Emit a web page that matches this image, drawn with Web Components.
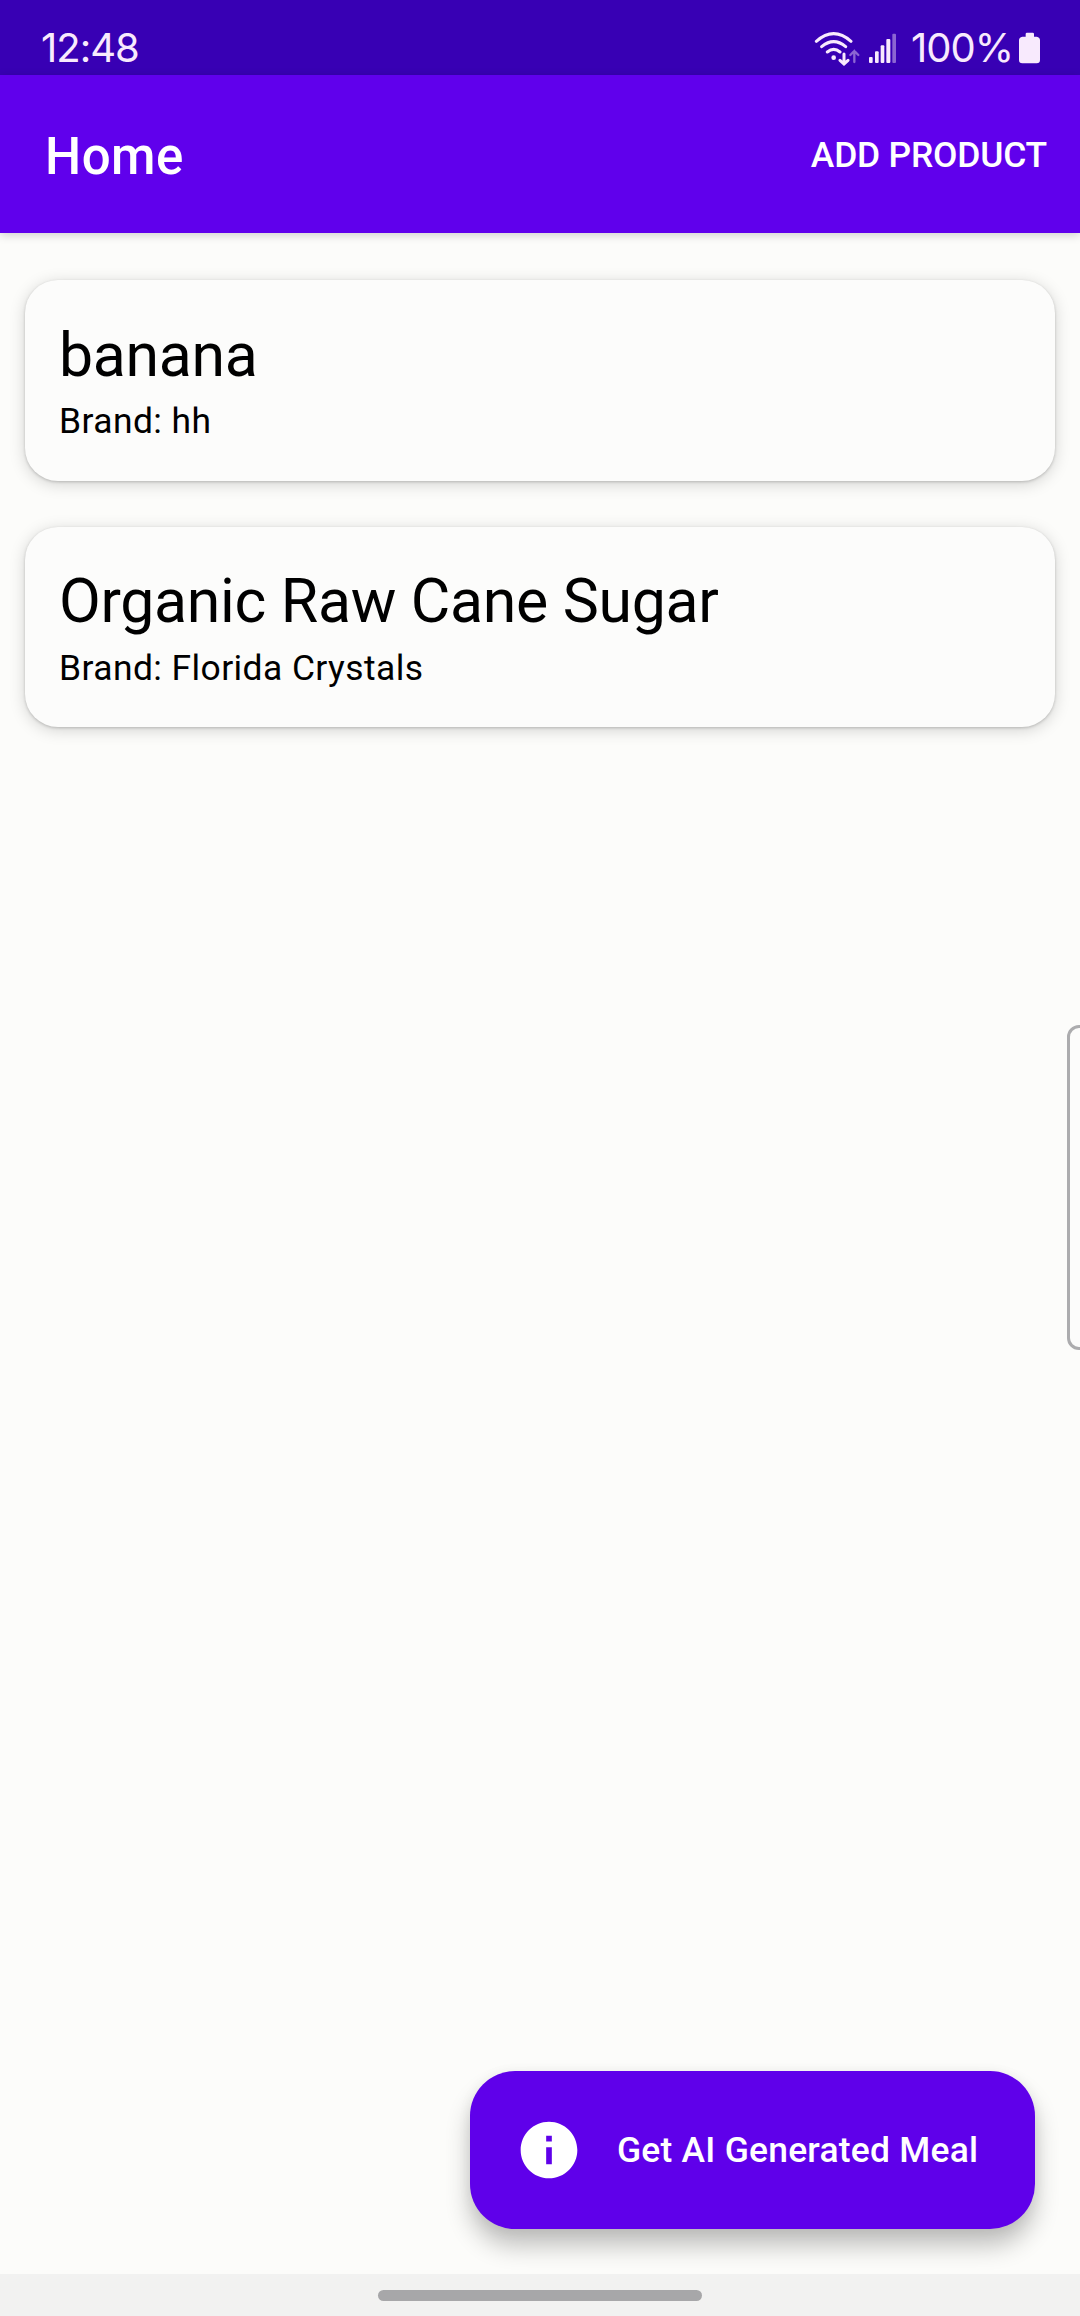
<!DOCTYPE html>
<html lang="en">
<head>
<meta charset="utf-8">
<title>Home</title>
<style>
html,body{margin:0;padding:0}
body{width:1080px;height:2316px;overflow:hidden;background:#fcfcfa;font-family:Roboto,sans-serif}
</style>
</head>
<body>
<meal-app></meal-app>
<script>
const define = (name, html) => customElements.define(name, class extends HTMLElement {
  constructor() {
    super();
    const t = document.createElement('template');
    t.innerHTML = html;
    this.attachShadow({ mode: 'open' }).append(t.content.cloneNode(true));
  }
});

define('status-bar', `
<style>
:host{display:flex;justify-content:space-between;align-items:flex-start;box-sizing:border-box;height:75px;padding:24px 40px 0 41px;background:#3800b4;color:#f8eafd;font-family:Inter,sans-serif;font-size:40px;line-height:48px}
.time{letter-spacing:-1px}
.right{display:flex}
.pct{letter-spacing:-1px;margin:0 0 0 13px}
svg{display:block}
.net{margin-top:6px}
.bat{margin:8px 0 0 6px}
</style>
<span class="time">12:48</span>
<div class="right">
<svg class="net" width="84" height="36" viewBox="102 90 252 108" fill="none" stroke="#f8eafd" stroke-width="9" stroke-linecap="round">
<path d="M109 124Q161 78 213 124M125 140Q161 110 197 140M142 156Q161 140 180 156"/>
<circle cx="161" cy="173" r="7" fill="#f8eafd" stroke="none"/>
<path d="M192 162V191M180 181L192 192L204 181"/>
<path d="M223 186V153M211 165L223 153L235 165" stroke="#8c66d2" stroke-width="7"/>
<g stroke="none" fill="#f8eafd"><rect x="267" y="171" width="11" height="18" rx="3"/><rect x="285" y="154" width="11" height="35" rx="3"/><rect x="302" y="136" width="11" height="53" rx="3"/><rect x="319" y="117" width="12" height="72" rx="3"/><rect x="337" y="101" width="11" height="88" rx="3" fill="#8c66d2"/></g>
</svg>
<span class="pct">100%</span>
<svg class="bat" width="21" height="32" viewBox="0 0 63 96" fill="#f8eafd"><path d="M20 6Q20 2 24 2H41Q45 2 45 6V14H53Q63 16 63 25V84Q63 94 53 94H10Q0 94 0 84V25Q0 16 10 14H20Z"/></svg>
</div>`);

define('app-bar', `
<style>
:host{display:flex;justify-content:space-between;align-items:center;box-sizing:border-box;height:158px;padding:0 33px 0 45px;background:#6000ec;color:#fff;box-shadow:0 2px 9px rgba(0,0,0,.18);font-weight:500}
.title{font-size:51px;line-height:60px;letter-spacing:.5px;padding-top:5px}
.action{font-size:35.44px;line-height:42px;letter-spacing:-.2px;padding-top:1px}
</style>
<span class="title"><slot></slot></span><span class="action"><slot name="action"></slot></span>`);

define('product-card', `
<style>
:host{display:flex;flex-direction:column;box-sizing:border-box;height:200.5px;padding:38.5px 34px 0;border-radius:33px;background:#fcfcfb;color:#000;box-shadow:0 1px 3px rgba(0,0,0,.19),0 3px 16px rgba(0,0,0,.17)}
.name{font-size:60.75px;line-height:74px;letter-spacing:-.3px}
.brand{font-size:35.44px;line-height:45px;letter-spacing:.42px;margin-top:6.5px}
</style>
<span class="name"><slot></slot></span><span class="brand"><slot name="brand"></slot></span>`);

define('info-fab', `
<style>
:host{display:flex;align-items:center;box-sizing:border-box;width:565px;height:158px;padding-left:45px;border-radius:45px;background:#5f00ea;color:#fff;box-shadow:0 17px 24px rgba(0,0,0,.24),0 2px 14px rgba(0,0,0,.06)}
svg{display:block;width:68px;height:68px}
span{font-size:35.44px;line-height:40px;font-weight:500;letter-spacing:.23px;margin-left:34px;white-space:nowrap}
</style>
<svg viewBox="0 0 24 24" fill="#fff"><path d="M12 2C6.48 2 2 6.48 2 12s4.48 10 10 10 10-4.48 10-10S17.52 2 12 2zm1 15h-2v-6h2v6zm0-8h-2V7h2v2z"/></svg>
<span><slot></slot></span>`);

define('edge-handle', `
<style>
:host{display:block;box-sizing:border-box;position:absolute;left:1067px;top:1025px;width:24px;height:325px;border:3px solid #acacae;border-radius:12px;background:#fcfcfb}
</style>`);

define('nav-bar', `
<style>
:host{display:flex;justify-content:center;box-sizing:border-box;height:42px;padding-top:16px;background:#f2f2f1}
i{width:324px;height:11px;border-radius:6px;background:#a7a7a9}
</style><i></i>`);

define('meal-app', `
<style>
:host{display:flex;flex-direction:column;position:relative;width:1080px;height:2316px;overflow:hidden;background:#fcfcfa}
main{flex:1;display:flex;flex-direction:column;gap:46px;padding:47px 25px 0}
info-fab{align-self:flex-end;margin:auto 20px 45px 0}
</style>
<status-bar></status-bar>
<app-bar>Home<span slot="action">ADD PRODUCT</span></app-bar>
<main>
<product-card>banana<span slot="brand">Brand: hh</span></product-card>
<product-card>Organic Raw Cane Sugar<span slot="brand">Brand: Florida Crystals</span></product-card>
<info-fab>Get AI Generated Meal</info-fab>
</main>
<nav-bar></nav-bar>
<edge-handle></edge-handle>`);
</script>
</body>
</html>
